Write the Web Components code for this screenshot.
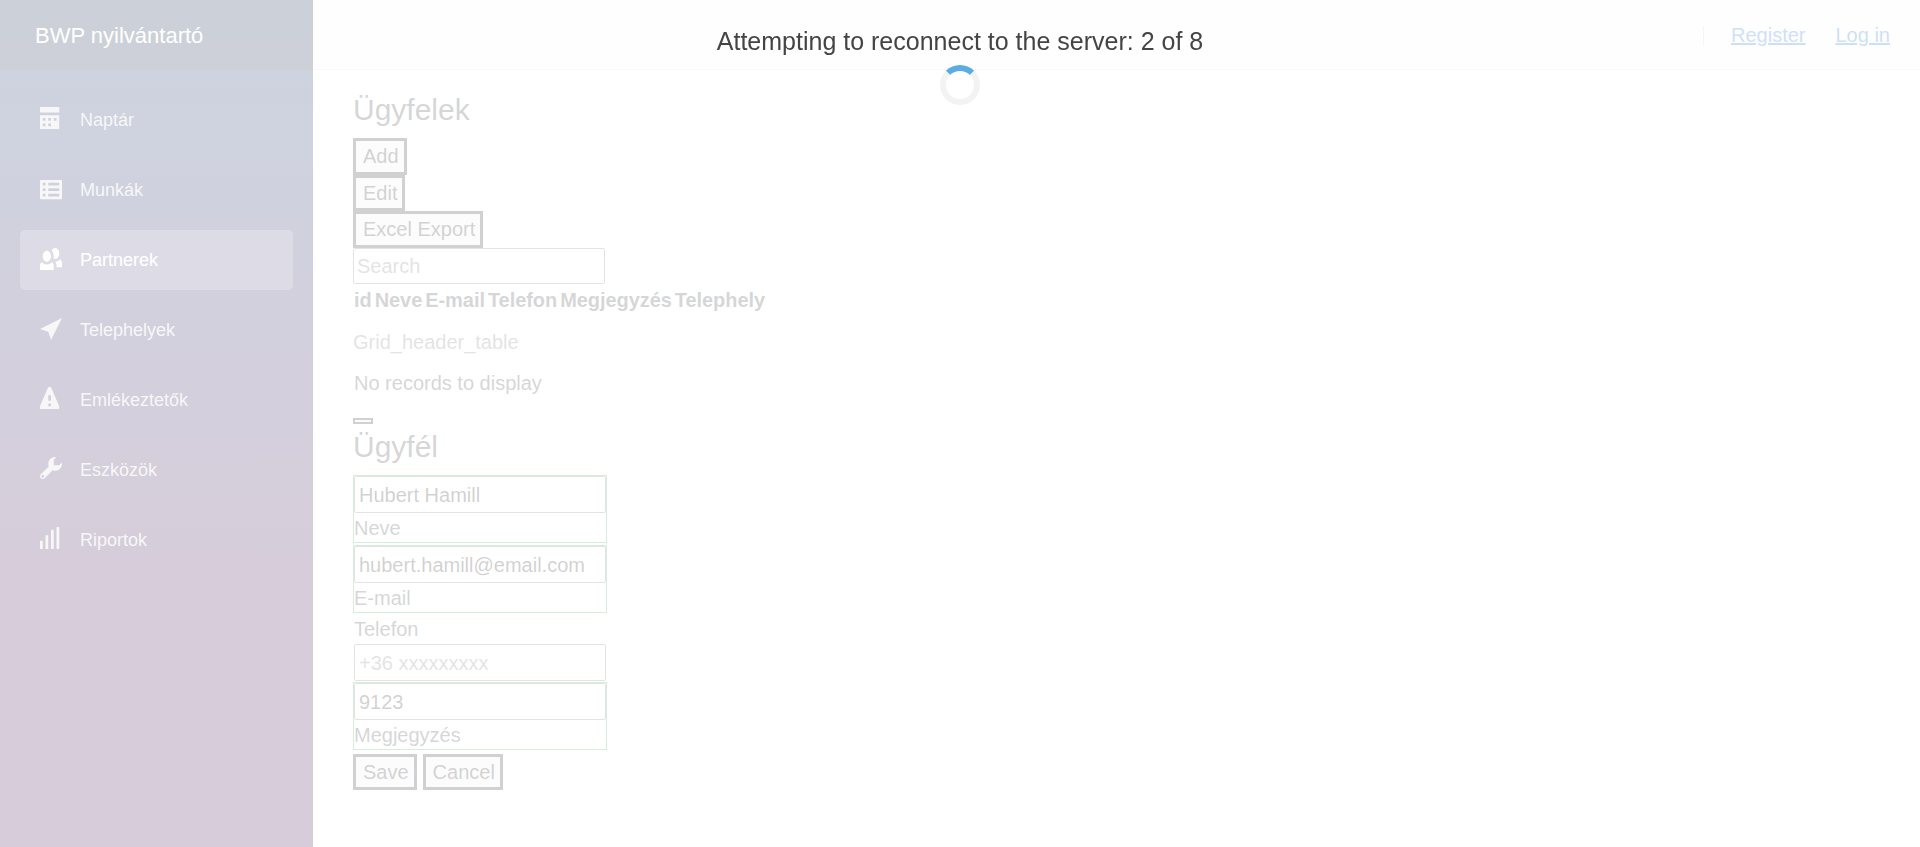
<!DOCTYPE html>
<html lang="hu">
<head>
<meta charset="utf-8">
<title>BWP nyilvántartó</title>
<style>
    html, body { margin: 0; height: 100%; overflow: hidden; }
    body { font-family: "Liberation Sans", Arial, sans-serif; font-size: 20px; color: #2f3337; background: #fff; }
</style>
</head>
<body>
<app-shell>
    <side-bar slot="side" brand="BWP nyilvántartó">
        <nav-link icon="calendar">Naptár</nav-link>
        <nav-link icon="list">Munkák</nav-link>
        <nav-link icon="people" active>Partnerek</nav-link>
        <nav-link icon="location">Telephelyek</nav-link>
        <nav-link icon="warning">Emlékeztetők</nav-link>
        <nav-link icon="wrench">Eszközök</nav-link>
        <nav-link icon="signal">Riportok</nav-link>
    </side-bar>
    <top-row slot="top"></top-row>
    <partner-page></partner-page>
</app-shell>
<reconnect-modal current="2" total="8"></reconnect-modal>

<script>
// icons, viewBox 0 0 8 8, dy nudges the glyph like the icon font does
const ICONS = {
    calendar: {dy: -2, d: "M0 0v2h7v-2h-7zm0 3v4.91c0 .05.04.09.09.09h6.81c.05 0 .09-.04.09-.09v-4.91h-7zm1 1h1v1h-1v-1zm2 0h1v1h-1v-1zm2 0h1v1h-1v-1zm-4 2h1v1h-1v-1zm2 0h1v1h-1v-1z"},
    list: {dy: 1, d: "M.3 0h7.4c.17 0 .3.13.3.3v6.4c0 .17-.13.3-.3.3h-7.4c-.17 0-.3-.13-.3-.3v-6.4c0-.17.13-.3.3-.3zm.7 1v1h1v-1h-1zm2 0v1h4v-1h-4zm-2 2v1h1v-1h-1zm2 0v1h4v-1h-4zm-2 2v1h1v-1h-1zm2 0v1h4v-1h-4z"},
    people: {dy: -1, d: "M5.5 0c-.51 0-.95.35-1.22.88.45.54.72 1.28.72 2.13 0 .29-.03.55-.09.81.19.11.38.19.59.19.83 0 1.5-.9 1.5-2s-.67-2-1.5-2zm-3 1c-.83 0-1.5.9-1.5 2s.67 2 1.5 2 1.5-.9 1.5-2-.67-2-1.5-2zm4.75 3.16c-.43.51-1.02.82-1.69.84.27.38.44.84.44 1.34v.66h2v-1.66c0-.52-.31-.97-.75-1.19zm-6.5 1c-.44.22-.75.67-.75 1.19v1.66h5v-1.66c0-.52-.31-.97-.75-1.19-.45.53-1.06.84-1.75.84s-1.3-.32-1.75-.84z"},
    location: {dy: -1, d: "M8 0l-8 4 3 1 1 3 4-8z"},
    warning: {dy: -2, d: "M3.09 0c-.06 0-.1.04-.13.09l-2.94 6.81c-.02.05-.03.13-.03.19v.81c0 .05.04.09.09.09h6.81c.05 0 .09-.04.09-.09v-.81c0-.05-.01-.14-.03-.19l-2.94-6.81c-.02-.05-.07-.09-.13-.09h-.81zm-.09 3h1v2h-1v-2zm0 3h1v1h-1v-1z"},
    wrench: {dy: -2, d: "M5.5 0c-1.38 0-2.5 1.12-2.5 2.5 0 .32.08.62.19.91l-2.91 2.88c-.39.39-.39 1.05 0 1.44.2.2.46.28.72.28.26 0 .52-.09.72-.28l2.88-2.91c.28.11.58.19.91.19 1.38 0 2.5-1.12 2.5-2.5 0-.16 0-.32-.03-.47l-.97.97h-2v-2l.97-.97c-.15-.03-.31-.03-.47-.03zm-4.5 6.5c.28 0 .5.22.5.5s-.22.5-.5.5-.5-.22-.5-.5.22-.5.5-.5z"},
    signal: {dy: -2, d: "M6 0v8h1v-8h-1zm-2 1v7h1v-7h-1zm-2 2v5h1v-5h-1zm-2 2v3h1v-3h-1z"}
};

// nav-link
const navLinkTemplate = document.createElement("template");
navLinkTemplate.innerHTML = /*html*/`
    <style>
        :host {
            display: block;
            height: 70px;
            padding: 0 20px 0 20px;
            box-sizing: border-box;
            font-size: 18px;
        }
        a {
            display: flex;
            align-items: center;
            height: 60px;
            padding-left: 20px;
            border-radius: 5px;
            color: #d7d7d7;
            text-decoration: none;
        }
        :host([active]) a {
            background: rgba(255, 255, 255, 0.25);
            color: #fff;
        }
        svg {
            width: 22px;
            height: 22px;
            margin-right: 18px;
            fill: currentColor;
            flex: none;
        }
    </style>
    <a href="#"><svg viewBox="0 0 8 8"><path></path></svg><slot></slot></a>
`;

class NavLink extends HTMLElement {
    constructor() {
        super();
        this.attachShadow({mode: "open"});
        this.shadowRoot.appendChild(navLinkTemplate.content.cloneNode(true));
        const icon = ICONS[this.getAttribute("icon")];
        this.shadowRoot.querySelector("path").setAttribute("d", icon.d);
        this.shadowRoot.querySelector("svg").style.transform = `translateY(${icon.dy}px)`;
    }
}
window.customElements.define("nav-link", NavLink);

// side-bar
const sideBarTemplate = document.createElement("template");
sideBarTemplate.innerHTML = /*html*/`
    <style>
        :host {
            display: block;
            width: 313px;
            height: 100%;
            background-image: linear-gradient(180deg, #052767 0%, #3a0647 70%);
            flex: none;
        }
        .brand {
            height: 70px;
            display: flex;
            align-items: center;
            padding: 1px 0 0 35px;
            box-sizing: border-box;
            background: rgba(0, 0, 0, 0.4);
            color: #fff;
            font-size: 22px;
        }
        .links {
            padding-top: 20px;
        }
    </style>
    <div class="brand"></div>
    <div class="links"><slot></slot></div>
`;

class SideBar extends HTMLElement {
    constructor() {
        super();
        this.attachShadow({mode: "open"});
        this.shadowRoot.appendChild(sideBarTemplate.content.cloneNode(true));
        this.shadowRoot.querySelector(".brand").textContent = this.getAttribute("brand");
    }
}
window.customElements.define("side-bar", SideBar);

// top-row
const topRowTemplate = document.createElement("template");
topRowTemplate.innerHTML = /*html*/`
    <style>
        :host {
            display: flex;
            justify-content: flex-end;
            align-items: center;
            height: 70px;
            box-sizing: border-box;
            padding: 2px 30px 0 0;
            background: #f7f7f7;
            border-bottom: 1px solid #d6d5d5;
            font-size: 20px;
        }
        .sep {
            width: 1px;
            height: 19px;
            background: #dcc8b4;
            margin-right: 27px;
        }
        a {
            color: #0366d6;
            margin-left: 30px;
        }
        a:first-of-type { margin-left: 0; }
    </style>
    <span class="sep"></span>
    <a href="#">Register</a>
    <a href="#">Log in</a>
`;

class TopRow extends HTMLElement {
    constructor() {
        super();
        this.attachShadow({mode: "open"});
        this.shadowRoot.appendChild(topRowTemplate.content.cloneNode(true));
    }
}
window.customElements.define("top-row", TopRow);

// plain-button
const plainButtonTemplate = document.createElement("template");
plainButtonTemplate.innerHTML = /*html*/`
    <style>
        :host {
            display: block;
            width: fit-content;
            box-sizing: border-box;
            height: 36.7px;
            padding: 0 5px 0 7px;
            border: 3px solid #1a1a1a;
            background: #efefef;
            font-size: 20px;
            line-height: 30px;
            color: #222;
        }
    </style>
    <slot></slot>
`;

class PlainButton extends HTMLElement {
    constructor() {
        super();
        this.attachShadow({mode: "open"});
        this.shadowRoot.appendChild(plainButtonTemplate.content.cloneNode(true));
    }
}
window.customElements.define("plain-button", PlainButton);

// form-field
const formFieldTemplate = document.createElement("template");
formFieldTemplate.innerHTML = /*html*/`
    <style>
        :host {
            display: block;
            width: 254px;
            box-sizing: border-box;
            line-height: 30px;
            padding-left: 1px;
        }
        :host([valid]) {
            height: 68px;
            padding-top: 1px;
            outline: 1px solid #26b050;
            outline-offset: -1px;
        }
        .box {
            height: 37px;
            box-sizing: border-box;
            width: 252px;
            border: 1px solid #767676;
            border-radius: 2px;
            padding: 0 4px;
            line-height: 36px;
            color: #1a1a1a;
            background: #fff;
        }
        .box.empty { color: #757575; }
        .label { display: block; }
        :host([label-first]) .label { padding-top: 1px; }
    </style>
`;

class FormField extends HTMLElement {
    constructor() {
        super();
        this.attachShadow({mode: "open"});
        this.shadowRoot.appendChild(formFieldTemplate.content.cloneNode(true));
        const box = document.createElement("div");
        box.className = "box";
        box.textContent = this.getAttribute("value") || this.getAttribute("placeholder");
        if (!this.getAttribute("value")) box.classList.add("empty");
        const label = document.createElement("span");
        label.className = "label";
        label.textContent = this.getAttribute("label");
        if (this.hasAttribute("label-first")) {
            this.shadowRoot.append(label, box);
        } else {
            this.shadowRoot.append(box, label);
        }
    }
}
window.customElements.define("form-field", FormField);

// partner-page
const partnerPageTemplate = document.createElement("template");
partnerPageTemplate.innerHTML = /*html*/`
    <style>
        :host {
            display: block;
            padding: 16px 0 0 40px;
        }
        h3 {
            margin: 0 0 4px;
            font-size: 30px;
            font-weight: 400;
            line-height: 48px;
        }
        h3.second { line-height: 46px; margin-bottom: 5px; }
        .search {
            width: 252px;
            height: 36px;
            box-sizing: border-box;
            border: 1px solid #767676;
            border-radius: 2px;
            padding: 0 3px;
            line-height: 34px;
            color: #757575;
        }
        .head {
            display: flex;
            gap: 3px;
            font-weight: 700;
            line-height: 30px;
            padding-left: 1px;
            margin-top: 1px;
            letter-spacing: -0.06px;
        }
        .muted { color: #757575; line-height: 30px; margin-top: 11.5px; }
        .empty { line-height: 30px; margin-top: 11px; padding-left: 1px; }
        .tiny { width: 20px; height: 6px; box-sizing: border-box; border: 2px solid #1a1a1a; background: #efefef; margin-top: 20px; }
        .btns { display: flex; gap: 6px; margin-top: 4px; }
    </style>
    <h3>Ügyfelek</h3>
    <plain-button>Add</plain-button>
    <plain-button>Edit</plain-button>
    <plain-button>Excel Export</plain-button>
    <div class="search">Search</div>
    <div class="head"><span>id</span><span>Neve</span><span>E-mail</span><span>Telefon</span><span>Megjegyzés</span><span>Telephely</span></div>
    <div class="muted">Grid_header_table</div>
    <div class="empty">No records to display</div>
    <div class="tiny"></div>
    <h3 class="second">Ügyfél</h3>
    <form-field valid value="Hubert Hamill" label="Neve"></form-field>
    <form-field valid value="hubert.hamill@email.com" label="E-mail" style="margin-top:2px"></form-field>
    <form-field label-first placeholder="+36 xxxxxxxxx" label="Telefon"></form-field>
    <form-field valid value="9123" label="Megjegyzés" style="margin-top:1px"></form-field>
    <div class="btns"><plain-button>Save</plain-button><plain-button>Cancel</plain-button></div>
`;

class PartnerPage extends HTMLElement {
    constructor() {
        super();
        this.attachShadow({mode: "open"});
        this.shadowRoot.appendChild(partnerPageTemplate.content.cloneNode(true));
    }
}
window.customElements.define("partner-page", PartnerPage);

// app-shell
const appShellTemplate = document.createElement("template");
appShellTemplate.innerHTML = /*html*/`
    <style>
        :host {
            display: flex;
            height: 100vh;
        }
        main {
            flex: 1;
            min-width: 0;
        }
    </style>
    <slot name="side"></slot>
    <main>
        <slot name="top"></slot>
        <slot></slot>
    </main>
`;

class AppShell extends HTMLElement {
    constructor() {
        super();
        this.attachShadow({mode: "open"});
        this.shadowRoot.appendChild(appShellTemplate.content.cloneNode(true));
    }
}
window.customElements.define("app-shell", AppShell);

// reconnect-modal, lies over the whole page
const reconnectModalTemplate = document.createElement("template");
reconnectModalTemplate.innerHTML = /*html*/`
    <style>
        :host {
            position: fixed;
            inset: 0;
            z-index: 1000;
            background: rgba(255, 255, 255, 0.8);
            display: flex;
            flex-direction: column;
            align-items: center;
            padding-top: 26px;
            color: #444;
            font-size: 25px;
            box-sizing: border-box;
        }
        p { margin: 0; line-height: 30px; }
        .spinner {
            width: 40px;
            height: 40px;
            box-sizing: border-box;
            margin-top: 9px;
            border: 6px solid #f3f3f3;
            border-top-color: #5aade2;
            border-radius: 50%;
        }
    </style>
    <p></p>
    <div class="spinner"></div>
`;

class ReconnectModal extends HTMLElement {
    constructor() {
        super();
        this.attachShadow({mode: "open"});
        this.shadowRoot.appendChild(reconnectModalTemplate.content.cloneNode(true));
        this.shadowRoot.querySelector("p").textContent =
            `Attempting to reconnect to the server: ${this.getAttribute("current")} of ${this.getAttribute("total")}`;
    }
}
window.customElements.define("reconnect-modal", ReconnectModal);
</script>
</body>
</html>
